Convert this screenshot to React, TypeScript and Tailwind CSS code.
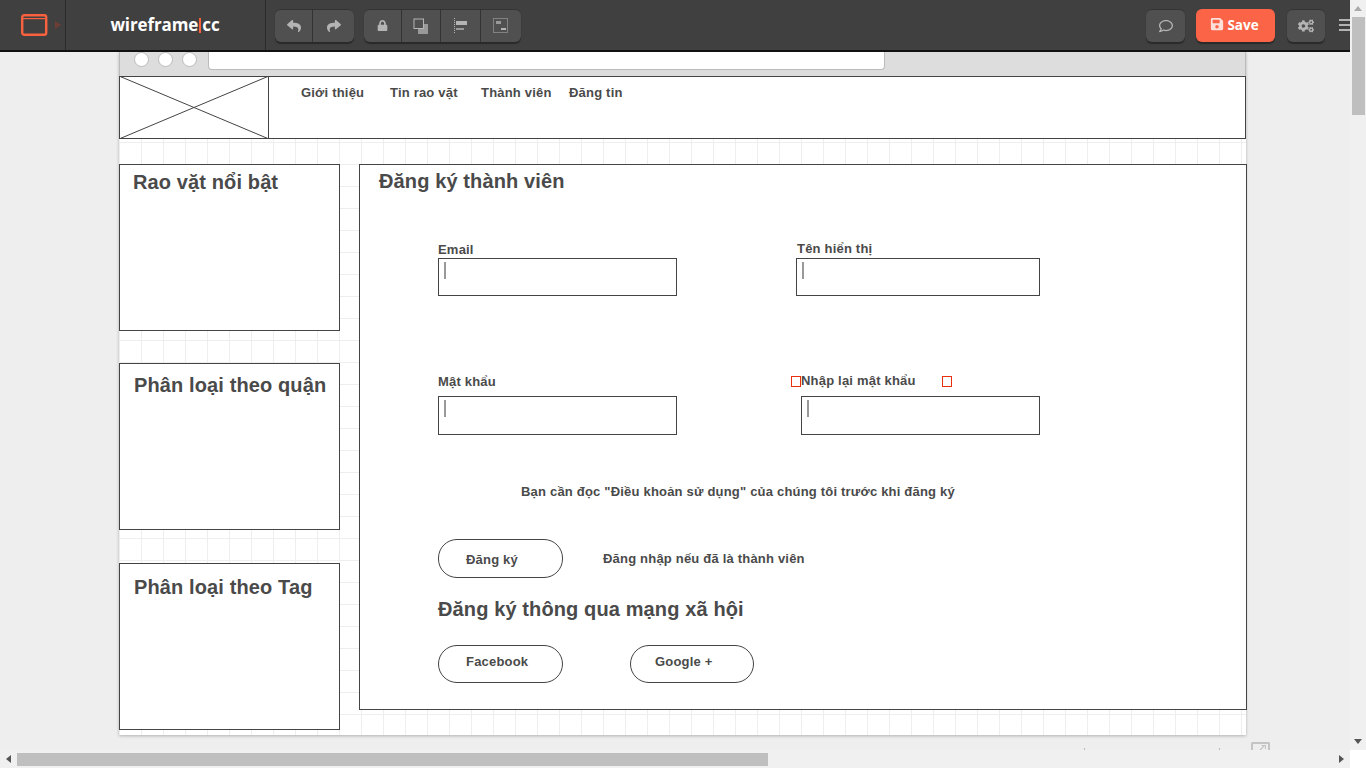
import { FaReply, FaShare, FaLock, FaRegComment, FaSave, FaCogs } from 'react-icons/fa';

const ToolButton = ({ children, className = '' }: { children: React.ReactNode; className?: string }) => (
  <div className={`h-[32px] flex items-center justify-center border-r border-[#333] last:border-r-0 text-[#b4b4b4] ${className}`}>
    {children}
  </div>
);

const groupClass = 'flex h-[33px] rounded-[6px] bg-[#505050] shadow-[0_2px_1px_#2a2a2a] border-t border-[#333]';

const Label = ({ className, children }: { className: string; children: React.ReactNode }) => (
  <span className={`absolute text-[13px] leading-[16px] font-bold tracking-[0.2px] whitespace-nowrap text-[#4a4a4a] ${className}`}>{children}</span>
);

const Heading = ({ className, children }: { className: string; children: React.ReactNode }) => (
  <span className={`absolute text-[20px] leading-[24px] font-bold tracking-[0.12px] whitespace-nowrap text-[#4a4a4a] ${className}`}>{children}</span>
);

const Input = ({ className }: { className: string }) => (
  <div className={`absolute bg-white border border-[#444] pl-[5px] pt-[3px] ${className}`}>
    <div className="w-[2px] h-[17px] bg-[#999]" />
  </div>
);

export default function App() {
  return (
    <div className="w-[1366px] h-[768px] overflow-hidden flex bg-[#eee] font-['Liberation_Sans',Arial,sans-serif]">
      <div className="w-[1350px] flex flex-col">
        {/* toolbar */}
        <div className="h-[52px] shrink-0 bg-[#404040] border-b-2 border-[#111] flex items-center relative">
          <div className="w-[66px] h-[50px] flex items-center pl-[21px] gap-[7px] border-r border-[#2c2c2c]">
            <svg width="27" height="22" viewBox="0 0 27 22" className="shrink-0">
              <rect x="1.2" y="1.2" width="24" height="19.5" rx="2" fill="none" stroke="#f9613f" strokeWidth="2.4" />
              <rect x="2" y="4" width="23" height="1.2" fill="#f9613f" />
            </svg>
            <svg width="6" height="8" viewBox="0 0 6 8"><path d="M0 0 L6 4 L0 8Z" fill="#6e3d34" /></svg>
          </div>
          <div className="w-[200px] h-[50px] flex items-center justify-center border-r border-[#2c2c2c] pr-[1px]">
            <span className="flex items-center font-['Open_Sans',sans-serif] font-bold text-[17px] text-white tracking-[-0.1px]">
              wireframe<span className="w-[2px] h-[15px] bg-[#f9613f] mx-[1px]" />cc
            </span>
          </div>
          <div className={`${groupClass} ml-[9px] w-[79px]`}>
            <ToolButton className="w-[38px]"><FaReply size={14} /></ToolButton>
            <ToolButton className="w-[41px]"><FaShare size={14} /></ToolButton>
          </div>
          <div className={`${groupClass} ml-[10px] w-[157px]`}>
            <ToolButton className="w-[38px]"><FaLock size={11} /></ToolButton>
            <ToolButton className="w-[39px]">
              <svg width="16" height="16" viewBox="0 0 16 16">
                <rect x="5" y="6" width="10" height="10" fill="#999" />
                <rect x="1" y="1" width="9.5" height="9.5" fill="#505050" stroke="#b4b4b4" />
              </svg>
            </ToolButton>
            <ToolButton className="w-[40px]">
              <svg width="14" height="16" viewBox="0 0 14 16">
                <path d="M.5 0V16" stroke="#b4b4b4" strokeDasharray="1 1" />
                <rect x="2" y="3" width="11" height="4" fill="#b4b4b4" />
                <rect x="2" y="10" width="8" height="2" fill="#999" />
              </svg>
            </ToolButton>
            <ToolButton className="w-[40px]">
              <svg width="16" height="16" viewBox="0 0 16 16">
                <rect x=".5" y=".5" width="14" height="14" fill="none" stroke="#b4b4b4" strokeDasharray="1 1" />
                <rect x="3" y="3" width="5" height="3" fill="#999" />
                <rect x="8" y="10" width="5" height="2" fill="#b4b4b4" />
              </svg>
            </ToolButton>
          </div>
          <div className="ml-auto flex items-center">
            <div className={`${groupClass} w-[39px] items-center justify-center text-[#b4b4b4]`}><FaRegComment size={14} /></div>
            <div className="ml-[11px] w-[79px] h-[33px] rounded-[6px] bg-[#fb6446] shadow-[0_2px_1px_#2a2a2a] flex items-center justify-center gap-[3px] text-white font-bold text-[13.5px] pr-[2px]">
              <FaSave size={14} className="text-[#fde0da] -mt-[2px]" />
              <span className="font-['Open_Sans',sans-serif]">Save</span>
            </div>
            <div className={`${groupClass} ml-[12px] w-[38px] items-center justify-center text-[#b4b4b4]`}><FaCogs size={16} /></div>
            <div className="ml-[14px] mr-0 w-[11px] flex flex-col gap-[3px] overflow-hidden">
              <div className="h-[2px] bg-[#b4b4b4]" />
              <div className="h-[2px] bg-[#b4b4b4]" />
              <div className="h-[2px] bg-[#b4b4b4]" />
            </div>
          </div>
        </div>

        {/* canvas area */}
        <div className="flex-1 relative overflow-hidden">
          <div className="absolute left-[119px] top-0 w-[1127px] h-[683px] bg-white shadow-[0_1px_3px_rgba(0,0,0,0.25)]">
            <div className="h-[24px] bg-[#ddd] border-x border-[#bbb] flex items-start pl-[14px] gap-[9px]">
              <div className="w-[15px] h-[15px] rounded-full bg-white border border-[#bbb]" />
              <div className="w-[15px] h-[15px] rounded-full bg-white border border-[#bbb]" />
              <div className="w-[15px] h-[15px] rounded-full bg-white border border-[#bbb]" />
              <div className="w-[677px] h-[18px] ml-[2px] bg-white border border-[#bbb] border-t-0 rounded-b-[4px]" />
            </div>
            <div className="relative h-[659px] bg-[linear-gradient(#eee_1px,transparent_1px),linear-gradient(90deg,#eee_1px,transparent_1px)] bg-[size:22px_22px]">
              {/* header */}
              <div className="absolute left-0 top-0 w-[1127px] h-[63px] bg-white border border-[#444]" />
              <svg className="absolute left-0 top-0" width="150" height="63" viewBox="0 0 150 63">
                <rect x=".5" y=".5" width="149" height="62" fill="none" stroke="#444" />
                <path d="M0 0 L150 63 M150 0 L0 63" stroke="#444" strokeWidth="1" />
              </svg>
              <Label className="left-[182px] top-[9px]">Giới thiệu</Label>
              <Label className="left-[271px] top-[9px]">Tin rao vặt</Label>
              <Label className="left-[362px] top-[9px]">Thành viên</Label>
              <Label className="left-[450px] top-[9px]">Đăng tin</Label>

              {/* sidebar boxes */}
              <div className="absolute left-0 top-[88px] w-[221px] h-[167px] bg-white border border-[#444]" />
              <Heading className="left-[14px] top-[94px]">Rao vặt nổi bật</Heading>
              <div className="absolute left-0 top-[287px] w-[221px] h-[167px] bg-white border border-[#444]" />
              <Heading className="left-[15px] top-[297px]">Phân loại theo quận</Heading>
              <div className="absolute left-0 top-[487px] w-[221px] h-[167px] bg-white border border-[#444]" />
              <Heading className="left-[15px] top-[499px]">Phân loại theo Tag</Heading>

              {/* main panel */}
              <div className="absolute left-[240px] top-[88px] w-[888px] h-[546px] bg-white border border-[#444]" />
              <Heading className="left-[260px] top-[93px]">Đăng ký thành viên</Heading>

              <Label className="left-[319px] top-[166px]">Email</Label>
              <Input className="left-[319px] top-[182px] w-[239px] h-[38px]" />
              <Label className="left-[678px] top-[165px]">Tên hiển thị</Label>
              <Input className="left-[677px] top-[182px] w-[244px] h-[38px]" />
              <Label className="left-[319px] top-[298px]">Mật khẩu</Label>
              <Input className="left-[319px] top-[320px] w-[239px] h-[39px]" />
              <Label className="left-[682px] top-[297px]">Nhập lại mật khẩu</Label>
              <Input className="left-[682px] top-[320px] w-[239px] h-[39px]" />
              <div className="absolute left-[672px] top-[300px] w-[10px] h-[11px] border border-[#e8300f]" />
              <div className="absolute left-[823px] top-[300px] w-[10px] h-[11px] border border-[#e8300f]" />

              <Label className="left-[402px] top-[408px]">Bạn cần đọc "Điều khoản sử dụng" của chúng tôi trước khi đăng ký</Label>

              <div className="absolute left-[319px] top-[463px] w-[125px] h-[39px] rounded-[19px] bg-white border border-[#444]" />
              <Label className="left-[347px] top-[476px]">Đăng ký</Label>
              <Label className="left-[484px] top-[475px]">Đăng nhập nếu đã là thành viên</Label>
              <Heading className="left-[319px] top-[521px]">Đăng ký thông qua mạng xã hội</Heading>

              <div className="absolute left-[319px] top-[569px] w-[125px] h-[38px] rounded-[19px] bg-white border border-[#444]" />
              <Label className="left-[347px] top-[578px]">Facebook</Label>
              <div className="absolute left-[511px] top-[569px] w-[124px] h-[38px] rounded-[19px] bg-white border border-[#444]" />
              <Label className="left-[536px] top-[578px]">Google +</Label>
            </div>
          </div>
          {/* resize handle */}
          <div className="absolute left-[1251px] top-[690px] w-[19px] h-[8px] border-2 border-b-0 border-[#c4c4c4] rounded-t-[2px] overflow-hidden">
            <svg className="ml-[6px] mt-[1px]" width="7" height="5" viewBox="0 0 7 5">
              <path d="M1 5 L5 1 M2.5 .5H6.5V4" stroke="#c4c4c4" strokeWidth="1.2" fill="none" />
            </svg>
          </div>
          <div className="absolute left-[1084px] top-[696px] w-[1px] h-[2px] bg-[#bbb]" />
          <div className="absolute left-[1219px] top-[696px] w-[1px] h-[2px] bg-[#bbb]" />
        </div>

        {/* horizontal scrollbar */}
        <div className="h-[18px] shrink-0 bg-[#f0f0f0] flex items-center">
          <div className="w-[17px] flex justify-center">
            <svg width="5" height="8" viewBox="0 0 5 8"><path d="M5 0V8L0 4Z" fill="#555" /></svg>
          </div>
          <div className="w-[751px] h-[13px] bg-[#bfbfbf]" />
          <div className="flex-1" />
          <div className="w-[17px] flex justify-center">
            <svg width="5" height="8" viewBox="0 0 5 8"><path d="M0 0V8L5 4Z" fill="#555" /></svg>
          </div>
        </div>
      </div>

      {/* vertical scrollbar */}
      <div className="w-[16px] h-[768px] flex flex-col">
        <div className="h-[750px] bg-[#f0f0f0] flex flex-col items-center">
          <div className="h-[17px] flex items-center">
            <svg width="8" height="5" viewBox="0 0 8 5"><path d="M0 5H8L4 0Z" fill="#aaa" /></svg>
          </div>
          <div className="w-[13px] h-[98px] bg-[#bfbfbf]" />
          <div className="flex-1" />
          <div className="h-[17px] flex items-center">
            <svg width="8" height="5" viewBox="0 0 8 5"><path d="M0 0H8L4 5Z" fill="#555" /></svg>
          </div>
        </div>
        <div className="flex-1 bg-white" />
      </div>
    </div>
  );
}
